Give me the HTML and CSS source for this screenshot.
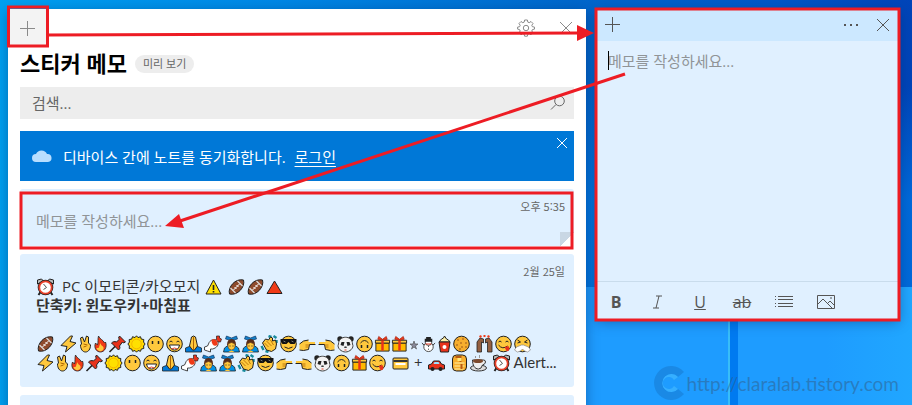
FILE: index.html
```html
<!DOCTYPE html>
<html lang="ko">
<head>
<meta charset="utf-8">
<meta name="viewport" content="width=device-width, initial-scale=1.0">
<title>스티커 메모</title>
<link rel="stylesheet" href="styles.css">
</head>
<body>
<!-- emoji used in the notes -->
<svg class="sprite" aria-hidden="true">
  <symbol id="clock" viewBox="0 0 18 18"><path d="M4 14l-2 3M14 14l2 3" stroke="#222" stroke-width="2"/><path d="M1 6V2l4-1 2 2zM17 6V2l-4-1-2 2z" fill="#bbb" stroke="#222"/><circle cx="9" cy="9.500" r="6.500" fill="#fff" stroke="#222" stroke-width="2.600"/><circle cx="9" cy="9.500" r="6.200" fill="#fff" stroke="#e8402a" stroke-width="1.800"/><path d="M7 6l3 3.500-3 2" fill="none" stroke="#555"/></symbol>
  <symbol id="warn" viewBox="0 0 18 18"><path d="M9 2l7.500 14h-15z" fill="#ffe000" stroke="#222" stroke-linejoin="round"/><path d="M9 7v5M9 13v1.500" stroke="#222" stroke-width="1.600"/></symbol>
  <symbol id="tri" viewBox="0 0 18 18"><path d="M9 3l7.500 12.500h-15z" fill="#f03a17" stroke="#222" stroke-linejoin="round"/></symbol>
  <symbol id="ball" viewBox="0 0 18 18"><path d="M2 16C0 9 8 0 16 2c2 7-6 16-14 14z" fill="#8e4b2c" stroke="#222"/><path d="M3 10l5 5M10 3l5 5" stroke="#ddd" stroke-width="1.200"/><path d="M6 12l6-6M7 9l2 2M9 7l2 2" stroke="#fff"/></symbol>
  <symbol id="bolt" viewBox="0 0 18 18"><path d="M11 1L1.500 10.500l6 1L6 17l10.500-9-6-1.500L13 1z" fill="#ffc83d" stroke="#222" stroke-linejoin="round"/></symbol>
  <symbol id="peace" viewBox="0 0 14 18"><path d="M3 9L2 3l2-1 2 5 2-6 2 1v6l2 2c0 4-2 7-5 7s-5-3-5-7z" fill="#ffc83d" stroke="#222"/><path d="M5 9l4 1M5 12l3-1" stroke="#ad6500"/></symbol>
  <symbol id="fire" viewBox="0 0 14 18"><path d="M5 1c1 3 5 4 6 7l1-1c2 5-1 10-5 10s-7-4-5-9l2 2c1-3 0-6 1-9z" fill="#f03a17" stroke="#222" stroke-width=".8"/><path d="M7 8c0 3 4 3 3 6s-6 3-7-1l2 0c1-2 1-3 2-5z" fill="#ffc83d"/></symbol>
  <symbol id="pin" viewBox="0 0 18 18"><path d="M1 17l6-6" stroke="#222" stroke-width="1.600"/><path d="M11 1l6 6-2 1-1-1-3 4c1 2 0 3-1 4L3 8c1-1 3-2 5-1l3-3-1-1z" fill="#e8321b" stroke="#222"/></symbol>
  <symbol id="sun" viewBox="0 0 18 18"><path d="M9 .8l1.500 1.800L13 1.700l.8 2.400 2.500.4-.2 2.600 1.500 1.900-1.500 2 .2 2.500-2.500.5-.8 2.300-2.500-.8L9 17.200l-1.500-1.700-2.500.8-.8-2.300-2.500-.5.2-2.500L.4 9l1.500-1.900-.2-2.600 2.500-.4L5 1.700l2.500.9z" fill="#ffd800" stroke="#222"/><circle cx="9" cy="9" r="4.800" fill="#ffe000" stroke="#f5b800"/></symbol>
  <symbol id="face" viewBox="0 0 18 18"><circle cx="9" cy="9" r="7.800" fill="#ffc83d" stroke="#222"/></symbol>
  <symbol id="mute" viewBox="0 0 18 18"><use href="#face"/><path d="M6 6v3M12 6v3" stroke="#222" stroke-width="1.500"/></symbol>
  <symbol id="grin" viewBox="0 0 18 18"><use href="#face"/><path d="M4 7q1.500-2 3 0M11 7q1.500-2 3 0" fill="none" stroke="#222"/><path d="M4 10h10q-1 5-5 5t-5-5z" fill="#fff" stroke="#222"/><path d="M6 14q3-2 6 0" stroke="#e8402a" fill="none"/></symbol>
  <symbol id="pray" viewBox="0 0 18 18"><path d="M1 13l5-2 3 3 3-3 5 2v4H1z" fill="#0078d7" stroke="#222" stroke-width=".8"/><path d="M9 1l2 1 2 9-3 4H8l-3-4 2-9z" fill="#ffc83d" stroke="#222"/><path d="M9 2v13" stroke="#ad6500"/></symbol>
  <symbol id="meat" viewBox="0 0 18 18"><path d="M10 8l3-4 0-3 3 0 0 2 2 1-1 3-3 0-2 4z" fill="#e8321b" stroke="#222" stroke-width=".7"/><path d="M5 9c1-4 6-6 9-3 2 4-1 7-5 8l-2 0 0 3-3-1-3-1 0-3 3-1z" fill="#fff" stroke="#333" stroke-width=".9"/><path d="M8 5c3-2 7 1 6 5-3 2-6 0-6-5z" fill="#f03a17"/></symbol>
  <symbol id="bow" viewBox="0 0 18 18"><path d="M1 17l1-4 4-3h6l4 3 1 4z" fill="#0091e6" stroke="#222" stroke-width=".8"/><path d="M9 3L4 1 3 4l4 1h4l4-1-1-3z" fill="#137fc9" stroke="#123a66" stroke-width=".7"/><path d="M4.500 10q0-6 4.500-6t4.500 6z" fill="#5a2d18"/><path d="M5.500 9q3.500-3 7 0v3q-1 3-3.500 3t-3.500-3z" fill="#ffc83d" stroke="#5a2d18" stroke-width=".6"/><path d="M7 11h1M10 11h1" stroke="#222"/><path d="M6 17q3-3 6 0z" fill="#ffc83d"/></symbol>
  <symbol id="clap" viewBox="0 0 18 18"><path d="M8 1l3 1M13 1l3 2M16 5v3M1 11l2 4M5 16l3 1" fill="none" stroke="#168a9c" stroke-width="2.400"/><path d="M2 8l3-4 3 1 2-3 2 1 0 3 3-1 1 4-1 5-4 2.500-5-1.500z" fill="#ffc83d" stroke="#222"/><path d="M4 8l4 4M6 6l5 5M10 5l3 5" stroke="#ad6500" stroke-width=".8"/></symbol>
  <symbol id="cool" viewBox="0 0 18 18"><use href="#face"/><path d="M1 4h16v2l-2 3h-4L9 7 7 9H3L1 6z" fill="#111"/><path d="M4 6l2 1M12 6l2 1" stroke="#777"/><path d="M5 12q4 3 8 0" fill="none" stroke="#222"/></symbol>
  <symbol id="point" viewBox="0 0 18 18"><path d="M1 9l4-3 5-1v2h6.500v2.500H11l-1 5-5 1-4-1z" fill="#ffc83d"/><path d="M1 15l4 .5 5-1 1-5h6M1 9l4-3 5-1" fill="none" stroke="#222"/><path d="M7 10h4M7 12h3" stroke="#ad6500" stroke-width=".8"/></symbol>
  <symbol id="panda" viewBox="0 0 18 18"><circle cx="3.500" cy="4" r="2.700" fill="#222"/><circle cx="14.500" cy="4" r="2.700" fill="#222"/><path d="M2 9c0-9 14-9 14 0 2 4-3 8-7 8s-9-4-7-8z" fill="#f2f2f2" stroke="#444"/><path d="M4 10l1-3 3 0-1 4zM14 10l-1-3-3 0 1 4z" fill="#222"/><path d="M8 12h2l-1 1z" stroke="#222"/><path d="M8 15h2" stroke="#e8402a"/></symbol>
  <symbol id="flip" viewBox="0 0 18 18"><use href="#face"/><path d="M5 8q4-5 8 0" fill="none" stroke="#222"/><path d="M6 10v3M12 10v3" stroke="#222" stroke-width="1.500"/></symbol>
  <symbol id="gift" viewBox="0 0 18 18"><path d="M2 8h14v8.500H2z" fill="#ffb900" stroke="#222"/><path d="M1.500 5h15v3h-15z" fill="#ffc83d" stroke="#222"/><path d="M9 5v11" stroke="#e8321b" stroke-width="2.600"/><path d="M9 5L4 4l1-3 4 3 4-3 1 3z" fill="#f03a17" stroke="#a01c0c" stroke-width=".7"/></symbol>
  <symbol id="star" viewBox="0 0 12 18"><path d="M6 6l1 3h3l-2.500 2 1 3L6 12l-2.500 2 1-3L2 9h3z" fill="#889" stroke="#444" stroke-width=".6"/></symbol>
  <symbol id="snow" viewBox="0 0 18 18"><path d="M2 8l3 3M16 8l-3 3" stroke="#222"/><circle cx="9" cy="12" r="5" fill="#fff" stroke="#444"/><circle cx="9" cy="7" r="3.500" fill="#fff" stroke="#444"/><path d="M5 5h8M6.500 3h5" stroke="#222" stroke-width="3"/><path d="M6 9h6" stroke="#e8321b"/><path d="M9 11v1M9 14v1" stroke="#222"/></symbol>
  <symbol id="pop" viewBox="0 0 14 18"><path d="M1.500 7l2.500-3 2-1 1-2 2 3 2 1 1.500 2z" fill="#fff1a8" stroke="#222"/><path d="M1.500 7h11L11 17H3z" fill="#e8321b" stroke="#222"/><circle cx="7" cy="12" r="2" fill="#fff"/></symbol>
  <symbol id="cookie" viewBox="0 0 18 18"><circle cx="9" cy="9" r="7.800" fill="#f7ae2e" stroke="#222"/><path d="M5 5h1M10 4h1M8 8h1M13 8h1M4 10h1M9 12h1M13 12h1M7 14h1" stroke="#7d3f16" stroke-width="1.400"/></symbol>
  <symbol id="hands" viewBox="0 0 18 18"><path d="M1.500 17V7l3-4 3.500 1v4l-2-1v10zM16.500 17V7l-3-4L10 4v4l2-1v10z" fill="#946042" stroke="#222" stroke-width=".8"/><path d="M4 2l2-1M8 1h2M12 1l2 1" stroke="#f03a17" stroke-width="2"/></symbol>
  <symbol id="yum" viewBox="0 0 18 18"><use href="#face"/><path d="M4 7q1.500-2 3 0M11 7q1.500-2 3 0M4 10q4 5 9 1" fill="none" stroke="#222"/><path d="M10 12l4-1 1 3q-1 3-3 2z" fill="#e8321b"/></symbol>
  <symbol id="huff" viewBox="0 0 18 18"><use href="#face"/><path d="M4 5l3 2-3 1M14 5l-3 2 3 1" fill="none" stroke="#222"/><path d="M8 10L3 12l-2 3 3 2 3-1 2-2 2 2 3 1 3-2-2-3-5-2z" fill="#fff" stroke="#888" stroke-width=".7"/></symbol>
  <symbol id="card" viewBox="0 0 18 18"><rect x="1.500" y="4" width="15" height="11" rx="1" fill="#ffc83d" stroke="#222"/><path d="M2 7h14" stroke="#333" stroke-width="2"/><path d="M4 10h10" stroke="#fff" stroke-width="2"/></symbol>
  <symbol id="car" viewBox="0 0 18 18"><path d="M1 15v-4l3-1 2-3h6l2 3 3 1v4z" fill="#e8321b" stroke="#222"/><path d="M6 10l1-2h4l1 2z" fill="#9be0ff"/><circle cx="5" cy="15" r="2" fill="#222"/><circle cx="13" cy="15" r="2" fill="#222"/></symbol>
  <symbol id="cake" viewBox="0 0 18 18"><rect x="2" y="1" width="14" height="16" rx="4" fill="#f7ae2e" stroke="#222"/><path d="M4 9h10M4 12h10M4 15h9" stroke="#fff1a8"/><path d="M5 3l5 0v5M11 10v5" stroke="#b95a13" stroke-width="2" fill="none"/><path d="M7 4h4v3H7z" fill="#ffe878"/></symbol>
  <symbol id="cup" viewBox="0 0 18 18"><ellipse cx="9" cy="14" rx="8" ry="3" fill="#ddd" stroke="#333"/><path d="M3 6h11q2 0 2 2t-3 3q-1 4-4 4c-4 0-6-4-6-9z" fill="#eee" stroke="#333"/><ellipse cx="8.500" cy="7" rx="5" ry="2" fill="#7d4a2d"/><path d="M6 4V2M10 4V1" stroke="#999"/></symbol>
</svg>

<main class="desktop">
  <section class="window list-window">
    <header class="list-bar">
      <button class="icon-btn add" aria-label="새 메모"><svg width="16" height="16" viewBox="0 0 16 16"><path d="M0 8.500h15M7.500 1v15"/></svg></button>
      <div class="bar-right">
        <button class="icon-btn" aria-label="설정"><svg width="18" height="18" viewBox="0 0 18 18"><circle cx="9" cy="9" r="2.700"/><path d="M7.600 1h2.800l.4 2.100 1.400.6L14 2.500l2 2-1.200 1.800.6 1.400 2.100.4v2l-2.100.5-.6 1.400 1.200 1.800-2 2-1.800-1.200-1.400.6-.4 2H7.600l-.4-2-1.400-.6L4 15.800l-2-2L3.200 12l-.6-1.400-2-.5v-2l2-.4.6-1.400L2 4.500l2-2 1.800 1.200 1.400-.6z"/></svg></button>
        <button class="icon-btn" aria-label="닫기"><svg width="12" height="12" viewBox="0 0 12 12"><path d="M0 0l12 12M12 0L0 12"/></svg></button>
      </div>
    </header>
    <div class="list-content">
      <div class="title-row">
        <h1>스티커 메모</h1>
        <span class="badge">미리 보기</span>
      </div>
      <label class="search">
        <input type="text" placeholder="검색..." aria-label="검색">
        <svg width="16" height="16" viewBox="0 0 16 16"><circle cx="9.500" cy="6" r="4.800"/><path d="M6 9.500L1 14.500"/></svg>
      </label>
      <div class="banner">
        <svg class="cloud" width="20" height="12" viewBox="0 0 20 12"><path d="M4 12a4 4 0 0 1 0-8 6 6 0 0 1 11 0 4 4 0 0 1 1 8z" fill="#b8deff"/></svg>
        <p>디바이스 간에 노트를 동기화합니다. <a href="#">로그인</a></p>
        <button class="banner-close" aria-label="닫기"><svg width="10" height="10" viewBox="0 0 10 10"><path d="M0 0l10 10M10 0L0 10"/></svg></button>
      </div>
      <div class="notes">
        <article class="note note-empty">
          <time>오후 5:35</time>
          <p class="hint">메모를 작성하세요...</p>
          <span class="fold"></span>
        </article>
        <article class="note">
          <time>2월 25일</time>
          <div class="note-text">
            <p><svg class="e"><use href="#clock"/></svg><span class="after-icon">PC 이모티콘/카오모지</span><svg class="e sp"><use href="#warn"/></svg><svg class="e sp"><use href="#ball"/></svg><svg class="e"><use href="#ball"/></svg><svg class="e"><use href="#tri"/></svg></p>
            <p><b>단축키: 윈도우키+마침표</b></p>
            <p></p>
            <p><svg class="e"><use href="#ball"/></svg><svg class="e sp"><use href="#bolt"/></svg><svg class="e thin"><use href="#peace"/></svg><svg class="e thin"><use href="#fire"/></svg><svg class="e"><use href="#pin"/></svg><svg class="e"><use href="#sun"/></svg><svg class="e"><use href="#mute"/></svg><svg class="e"><use href="#grin"/></svg><svg class="e"><use href="#pray"/></svg><svg class="e"><use href="#meat"/></svg><svg class="e"><use href="#bow"/></svg><svg class="e"><use href="#bow"/></svg><svg class="e"><use href="#clap"/></svg><svg class="e"><use href="#cool"/></svg><svg class="e"><use href="#point"/></svg><svg class="e left"><use href="#point"/></svg><svg class="e"><use href="#panda"/></svg><svg class="e"><use href="#flip"/></svg><svg class="e mid"><use href="#gift"/></svg><svg class="e mid"><use href="#gift"/></svg><svg class="e tiny"><use href="#star"/></svg><svg class="e mid"><use href="#snow"/></svg><svg class="e thin"><use href="#pop"/></svg><svg class="e"><use href="#cookie"/></svg><svg class="e sp"><use href="#hands"/></svg><svg class="e"><use href="#yum"/></svg><svg class="e"><use href="#huff"/></svg></p>
            <p><svg class="e"><use href="#bolt"/></svg><svg class="e thin"><use href="#peace"/></svg><svg class="e thin"><use href="#fire"/></svg><svg class="e"><use href="#pin"/></svg><svg class="e"><use href="#sun"/></svg><svg class="e"><use href="#mute"/></svg><svg class="e"><use href="#grin"/></svg><svg class="e"><use href="#pray"/></svg><svg class="e"><use href="#meat"/></svg><svg class="e"><use href="#bow"/></svg><svg class="e"><use href="#bow"/></svg><svg class="e"><use href="#clap"/></svg><svg class="e"><use href="#cool"/></svg><svg class="e"><use href="#point"/></svg><svg class="e left"><use href="#point"/></svg><svg class="e"><use href="#panda"/></svg><svg class="e"><use href="#flip"/></svg><svg class="e mid"><use href="#gift"/></svg><svg class="e"><use href="#yum"/></svg><svg class="e sp"><use href="#card"/></svg><span class="plus">+</span><svg class="e sp"><use href="#car"/></svg><svg class="e sp"><use href="#cake"/></svg><svg class="e"><use href="#cup"/></svg><svg class="e sp"><use href="#clock"/></svg><span class="more">Alert...</span></p>
          </div>
        </article>
        <article class="note"></article>
      </div>
    </div>
  </section>

  <section class="window memo-window">
    <header class="memo-bar">
      <button class="icon-btn" aria-label="새 메모"><svg width="16" height="16" viewBox="0 0 16 16"><path d="M0 7.500h15M7.500 0v15"/></svg></button>
      <div class="bar-right">
        <button class="icon-btn" aria-label="메뉴"><svg class="fill" width="16" height="4" viewBox="0 0 16 4"><path d="M1 1h2v2H1zM7 1h2v2H7zM13 1h2v2h-2z"/></svg></button>
        <button class="icon-btn" aria-label="닫기"><svg width="12" height="12" viewBox="0 0 12 12"><path d="M0 0l12 12M12 0L0 12"/></svg></button>
      </div>
    </header>
    <div class="memo-body">
      <textarea placeholder="메모를 작성하세요..." aria-label="메모"></textarea>
    </div>
    <footer class="memo-tools">
      <button class="bold" aria-label="굵게">B</button>
      <button aria-label="기울임꼴"><svg width="18" height="16" viewBox="0 0 18 16"><path d="M7 2h6M4 14h6M10 2L7 14"/></svg></button>
      <button class="under" aria-label="밑줄">U</button>
      <button class="strike" aria-label="취소선">ab</button>
      <button aria-label="글머리 기호"><svg width="18" height="16" viewBox="0 0 18 16"><path d="M3 2.500h15M3 5.500h15M3 9.500h15M3 12.500h15"/><path d="M0 2.500h1M0 5.500h1M0 9.500h1M0 12.500h1"/></svg></button>
      <button aria-label="이미지 추가"><svg width="18" height="16" viewBox="0 0 18 16"><path d="M.5 1.500h17v13H.5zM1 10l5-5 9 9M11 9l2-2 4 4"/><path d="M13 4h2"/></svg></button>
    </footer>
  </section>

  <div class="watermark">
    <svg width="34" height="34" viewBox="0 0 34 34"><path d="M33 6A17 17 0 1 0 33 28L27 23A9 9 0 1 1 27 11z"/><path class="inner" d="M27 11L23 14A6 6 0 1 0 23 20L27 23A9 9 0 1 1 27 11z"/></svg>
    <span>http://claralab.tistory.com</span>
  </div>

  <!-- red guide boxes and arrows -->
  <svg class="guide" width="912" height="405" viewBox="0 0 912 405" aria-hidden="true">
    <rect x="8.500" y="7" width="39" height="39"/>
    <rect x="21" y="193" width="551" height="55"/>
    <rect x="596" y="9" width="303" height="311"/>
    <path d="M46 35L580 33"/>
    <path d="M625 74L180 221"/>
    <path class="head" d="M577 25l17 8-17 8zM165 226l14-12 5 14z"/>
  </svg>
</main>
</body>
</html>
```
FILE: styles.css
```css
* {box-sizing: border-box;}

body {
  margin: 0;
  font-family: "Open Sans", "Noto Sans CJK KR", sans-serif;
  font-size: 15px;
  color: #333;
}

h1, p {margin: 0;}

button {
  padding: 0;
  border: 0;
  background: none;
  font: inherit;
  color: inherit;
}

svg {
  fill: none;
  stroke-width: 1;
}

.sprite {
  position: absolute;
  width: 0;
  height: 0;
}

/* desktop wallpaper */
.desktop {
  position: relative;
  display: flex;
  align-items: flex-start;
  gap: 11px;
  height: 100vh;
  padding: 9px 13px 0 8px;
  overflow: hidden;
  background:
    linear-gradient(#38bdf8, #38bdf8) 728px 100% / 2px 118px no-repeat,
    linear-gradient(#007af0, #007af0) 730px 100% / 8px 118px no-repeat,
    linear-gradient(90deg, #1e9cff 60%, #22b0ff) 586px 100% / 400px 118px no-repeat,
    linear-gradient(transparent 30%, rgba(0, 130, 240, .6) 70%) 586px 0 / 400px 287px no-repeat,
    linear-gradient(90deg, #00a0f0, #0088e6 30%, #0068cc 62%, #0058c8 85%, #0044b8);
}

.window {
  display: flex;
  flex-direction: column;
  box-shadow: 0 3px 12px rgba(0, 30, 80, .4);
}

.list-window {
  flex: 1;
  min-width: 0;
  min-height: 460px;
  background: #fff;
}

/* title bars */
.list-bar, .memo-bar {
  display: flex;
  justify-content: space-between;
}

.bar-right {display: flex;}

.icon-btn {
  display: flex;
  align-items: center;
  justify-content: center;
  width: 40px;
  height: 38px;
  stroke: #8a8a8a;
}

.add {background: #f3f3f3;}

.list-content {padding: 0 12px;}

.title-row {
  display: flex;
  align-items: center;
  gap: 8px;
  height: 32px;
}

h1 {
  font-size: 22px;
  line-height: 30px;
  color: #000;
}

.badge {
  margin-top: 2px;
  padding: 0 8px;
  border-radius: 9px;
  background: #ededed;
  font-size: 11px;
  line-height: 18px;
  color: #666;
}

.search {
  display: flex;
  align-items: center;
  height: 32px;
  margin-top: 8px;
  padding: 0 8px 0 12px;
  background: #ededed;
  stroke: #666;
}

.search input {
  flex: 1;
  min-width: 0;
  padding: 0;
  border: 0;
  background: none;
  font: inherit;
}

.search input::placeholder {color: #666;}

.banner {
  position: relative;
  display: flex;
  align-items: center;
  gap: 11px;
  height: 50px;
  margin-top: 12px;
  padding: 0 12px;
  background: #0078d7;
  color: #fff;
}

.banner a {
  margin-left: 5px;
  color: #fff;
  text-underline-offset: 3px;
}

.banner-close {
  position: absolute;
  top: 7px;
  right: 7px;
  display: flex;
  stroke: #fff;
}

/* saved notes */
.notes {
  display: flex;
  flex-direction: column;
  gap: 8px;
  margin-top: 8px;
}

.note {
  position: relative;
  min-height: 57px;
  padding: 23px 16px 15px;
  border-radius: 3px;
  background: #e0f0ff;
}

.note time {
  position: absolute;
  top: 8px;
  right: 9px;
  font-family: "Noto Sans CJK KR", sans-serif;
  font-size: 11px;
  line-height: 18px;
  color: #666;
}

.hint {
  line-height: 19px;
  color: #909497;
}

.fold {
  position: absolute;
  right: 0;
  bottom: 0;
  width: 14px;
  height: 14px;
  background: linear-gradient(135deg, #c9d7e4 50%, #fff 50%);
}

.note-text p {
  display: flex;
  align-items: center;
  height: 19px;
  line-height: 19px;
  white-space: nowrap;
}

/* emoji cells */
.e {
  flex: none;
  width: 19px;
  height: 18px;
}

.mid {width: 17px;}
.thin {width: 15px;}
.tiny {width: 12px;}
.left {transform: scaleX(-1);}
.sp {margin-left: 4px;}
.after-icon {margin-left: 7px;}
.plus {margin-left: 4px;}

.more {
  margin-left: 3px;
  font-family: Lato, sans-serif;
}

/* open memo */
.memo-window {
  flex: 0 0 302px;
  height: 310px;
  background: #e0f0ff;
}

.memo-bar {background: #cce8ff;}

.memo-bar .icon-btn {
  width: 32px;
  height: 32px;
  stroke: #555;
}

.memo-bar .fill {fill: #555; stroke: none;}

.memo-body {
  position: relative;
  flex: 1;
  padding: 10px 11px;
}

/* text cursor */
.memo-body::before {
  content: "";
  position: absolute;
  top: 10px;
  left: 11px;
  width: 1px;
  height: 19px;
  background: #000;
}

.memo-body textarea {
  display: block;
  width: 100%;
  height: 100%;
  padding: 0;
  border: 0;
  background: none;
  font: inherit;
  line-height: 20px;
  resize: none;
}

.memo-body textarea::placeholder {color: #909497;}

.memo-tools {
  display: flex;
  gap: 10px;
  padding: 2px 3px 0;
  border-top: 1px solid #c9dcec;
}

.memo-tools button {
  display: flex;
  align-items: center;
  justify-content: center;
  width: 32px;
  height: 35px;
  font-size: 16px;
  color: #555;
  stroke: #555;
}

.memo-tools .bold {font-weight: bold;}
.memo-tools .under {text-decoration: underline;}
.memo-tools .strike {text-decoration: line-through;}

.watermark {
  position: absolute;
  right: 13px;
  bottom: 5px;
  display: flex;
  align-items: center;
  gap: 2px;
  font-family: Lato, sans-serif;
  font-size: 19px;
  color: rgba(50, 90, 130, .5);
}

.watermark svg {fill: rgba(20, 110, 190, .4);}
.watermark .inner {fill: rgba(60, 180, 255, .8);}

.guide {
  position: absolute;
  top: 0;
  left: 0;
  stroke: #ed1c24;
  stroke-width: 3;
  pointer-events: none;
}

.guide .head {
  fill: #ed1c24;
  stroke: none;
}
```
